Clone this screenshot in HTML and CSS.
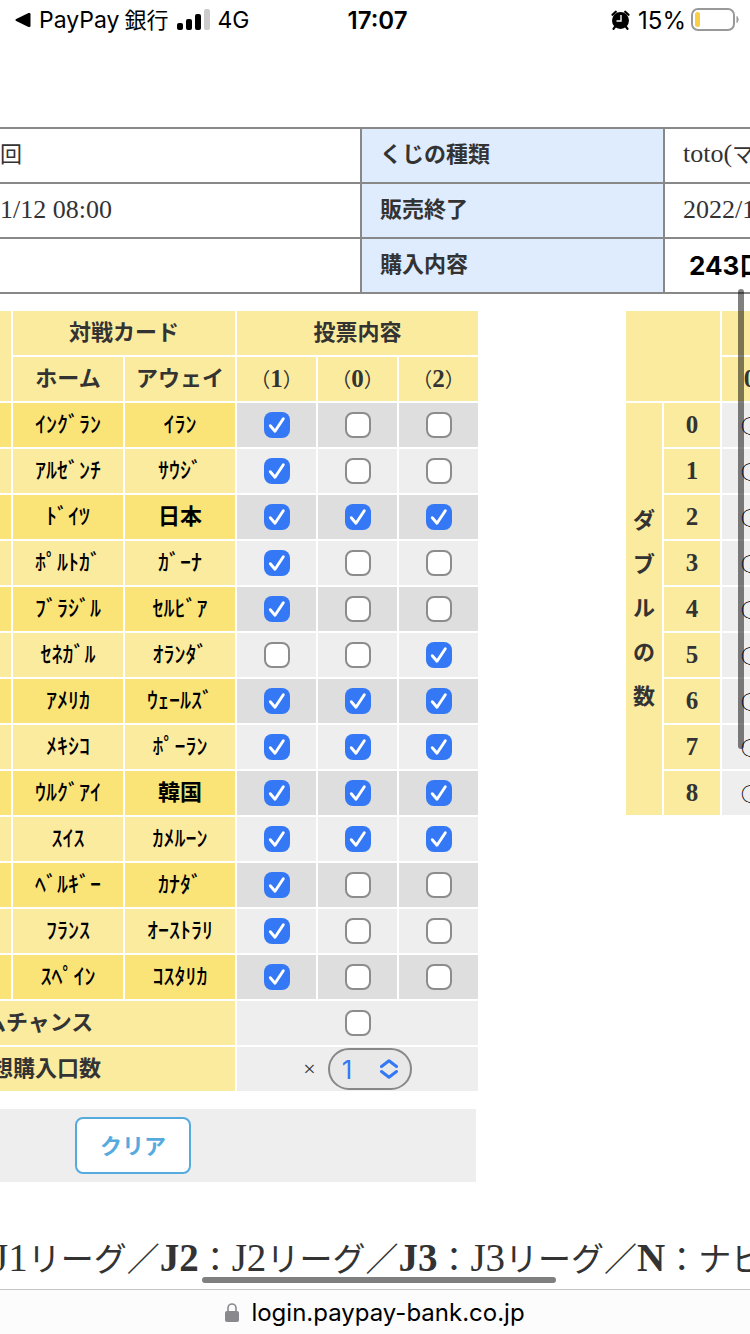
FILE: index.html
```
<!DOCTYPE html>
<html lang="ja">
<head>
    <meta charset="UTF-8">
    <meta name="viewport" content="width=device-width, initial-scale=1.0">
    <title>toto 購入</title>
    <link rel="stylesheet" href="styles.css">
</head>
<body>

    <header class="status">
        <div class="status-left">
            <svg class="back" width="16" height="16" viewBox="0 0 16 16"><path d="M1.2 7 13.5 1.1Q15.500 .4 15.500 2.200V13.800Q15.500 15.600 13.500 14.900L1.200 9Q-.4 8 1.200 7Z"/></svg>
            <span class="app">PayPay</span>
            <span class="bank">銀行</span>
            <svg class="signal" width="33" height="22" viewBox="0 0 33 22">
                <rect x="0" y="14" width="6" height="7" rx="2"/>
                <rect x="9" y="10" width="6" height="11" rx="2"/>
                <rect x="18" y="5" width="6" height="16" rx="2"/>
                <rect x="27" y="0" width="6" height="21" rx="2" fill="#ccc"/>
            </svg>
            <span>4G</span>
        </div>
        <time>17:07</time>
        <div class="status-right">
            <svg width="19" height="20" viewBox="0 0 19 20">
                <circle cx="9.500" cy="10.500" r="8.500"/>
                <path d="M1.500 4.800 4.800 1.700M14.200 1.700l3.300 3.100M4.200 16.500 2.500 18.800M14.800 16.500l1.700 2.300" stroke="#000" stroke-width="2.200" stroke-linecap="round"/>
                <path d="M10 5v6H5.500" fill="none" stroke="#fff" stroke-width="1.400"/>
            </svg>
            <span>15%</span>
            <svg width="49" height="24" viewBox="0 0 49 24">
                <rect x="1" y="1" width="42" height="21" rx="6" fill="#fff" stroke="#999" stroke-width="2"/>
                <rect x="4" y="4" width="5" height="15" rx="2.500" fill="#f7ce46"/>
                <path d="M46 8.500q2.500 3 0 6Z" fill="#999" stroke="#999"/>
            </svg>
        </div>
    </header>

    <main>
        <table class="info">
            <tr><td class="round">回</td><th>くじの種類</th><td class="right">toto(<span>マ</span></td></tr>
            <tr><td>1/12 08:00</td><th>販売終了</th><td class="right">2022/1</td></tr>
            <tr><td></td><th>購入内容</th><td class="right total">243口</td></tr>
        </table>

        <div class="sheets">
            <table class="card">
                <colgroup><col class="no"><col class="team"><col class="team"><col class="mark"><col class="mark"><col class="mark"></colgroup>
                <thead>
                    <tr><th rowspan="2"></th><th colspan="2">対戦カード</th><th colspan="3">投票内容</th></tr>
                    <tr><th>ホーム</th><th>アウェイ</th><th class="pick">（<b>1</b>）</th><th class="pick">（<b>0</b>）</th><th class="pick">（<b>2</b>）</th></tr>
                </thead>
                <tbody id="games"></tbody>
                <tfoot>
                    <tr>
                        <th colspan="3" class="cut chance"><label for="chance">ムチャンス</label></th>
                        <td colspan="3"><input type="checkbox" id="chance"></td>
                    </tr>
                    <tr>
                        <th colspan="3" class="cut units"><label for="units">想購入口数</label></th>
                        <td colspan="3">
                            <div class="amount">
                                <span>×</span>
                                <div class="picker">
                                    <select id="units"><option>1</option><option>2</option><option>3</option></select>
                                    <svg width="18" height="20" viewBox="0 0 18 20"><path d="M1.500 7.500 9 1.800l7.500 5.700M1.500 12.500 9 18.200l7.500-5.700"/></svg>
                                </div>
                            </div>
                        </td>
                    </tr>
                </tfoot>
            </table>

            <table class="multi">
                <colgroup><col class="side"><col class="num"><col class="num"></colgroup>
                <thead>
                    <tr><th colspan="2" rowspan="2"></th><th></th></tr>
                    <tr><th class="digit">0</th></tr>
                </thead>
                <tbody id="doubles"></tbody>
            </table>
        </div>

        <div class="actions">
            <button type="button" onclick="clearCard()">クリア</button>
        </div>

        <p class="legend"><span>J1</span>リーグ／<b>J2</b>：<span>J2</span>リーグ／<b>J3</b>：<span>J3</span>リーグ／<b>N</b>：ナビ</p>
    </main>

    <footer class="address">
        <svg width="14" height="19" viewBox="0 0 14 19"><rect y="8" width="14" height="11" rx="2"/><path d="M3 9V5a4 4 0 0 1 8 0V9" fill="none" stroke="#8a8a8e" stroke-width="1.600"/></svg>
        <span>login.paypay-bank.co.jp</span>
    </footer>

    <div class="scroll-y"></div>
    <div class="scroll-x"></div>

    <script src="script.js"></script>
</body>
</html>
```
FILE: styles.css
```
* {
    box-sizing: border-box;
}

body {
    position: relative;
    display: flex;
    flex-direction: column;
    height: 100vh;
    margin: 0;
    overflow: hidden;
    background-color: #fff;
    color: #333;
    font-family: 'Liberation Serif', 'Noto Sans CJK JP', serif;
    font-size: 22px;
}

/* status bar */
.status {
    display: grid;
    grid-template-columns: 1fr auto 1fr;
    align-items: center;
    height: 40px;
    padding: 0 10px 0 15px;
    color: #000;
    font-family: Inter, 'Noto Sans CJK JP', sans-serif;
    font-size: 24px;
}

.status-left,
.status-right {
    display: flex;
    align-items: center;
}

.status-left {
    gap: 8px;
    font-size: 23px;
}

.status-right {
    justify-content: flex-end;
    gap: 8px;
}

.status-right span {
    margin-right: -3px;
}

.status time {
    font-weight: 600;
}

.bank {
    margin-left: -3px;
    font-size: 22px;
    line-height: 24px;
}

main {
    flex: 1;
    min-height: 0;
    padding-top: 87px;
}

/* purchase summary */
.info {
    width: 100%;
    table-layout: fixed;
    border-collapse: collapse;
    white-space: nowrap;
}

.info th,
.info td {
    height: 55px;
    padding: 0 0 2px;
    border: 2px solid #888;
    line-height: 32px;
    text-align: left;
}

.info th {
    width: 303px;
    padding-left: 18px;
    background-color: #dfecfd;
}

.info td {
    width: 361px;
    border-left: 0;
    font-size: 26px;
}

.info td.right {
    width: auto;
    padding-left: 18px;
    border-right: 0;
}

.info td.round,
.info td.right span {
    font-size: 22px;
}

.info td.total {
    padding-left: 24px;
    padding-bottom: 0;
    color: #000;
    font-family: Inter, 'Noto Sans CJK JP', sans-serif;
    font-weight: 700;
}

/* voting card and multi table */
.sheets {
    display: flex;
    align-items: flex-start;
    gap: 144px;
    margin: 15px 0 0 -2px;
}

.card,
.multi {
    flex: none;
    table-layout: fixed;
    border-spacing: 2px;
    line-height: 32px;
}

.card {
    width: 482px;
}

.multi {
    width: 156px;
}

.no {
    width: 11px;
}

.team {
    width: 110px;
}

.mark {
    width: 79px;
}

.side {
    width: 36px;
}

.num {
    width: 56px;
}

.card th,
.card td,
.multi th,
.multi td {
    height: 44px;
    padding: 0;
    background-color: #eee;
    text-align: center;
    white-space: nowrap;
}

.card th,
.multi th {
    background-color: #fbeb9f;
}

.card th.pick {
    font-size: 20px;
    font-weight: 400;
}

.card th.pick b {
    font-size: 25px;
}

.card tbody th {
    color: #000;
    font-weight: 500;
}

.card tbody tr:nth-child(odd) th {
    background-color: #fae478;
}

.card tbody tr:nth-child(odd) td {
    background-color: #dedede;
}

.card tbody th.kanji {
    font-weight: 700;
}

.multi th.digit {
    font-size: 25px;
}

.multi th.vertical {
    line-height: 44px;
}

.multi td {
    color: #000;
    font-family: 'Noto Sans CJK JP', sans-serif;
    font-size: 18px;
    font-weight: 700;
}

.card th.cut {
    text-align: left;
}

.card th.chance {
    text-indent: -16px;
}

.card th.units {
    text-indent: -9px;
}

input[type="checkbox"] {
    display: block;
    width: 26px;
    height: 26px;
    margin: 0 auto;
    appearance: none;
    border: 2px solid #8c8c8c;
    border-radius: 8px;
    background-color: #fff;
}

input[type="checkbox"]:checked {
    border: 0;
    background: #3478f6 url("data:image/svg+xml,%3Csvg xmlns='http://www.w3.org/2000/svg' viewBox='0 0 26 26'%3E%3Cpath d='M6.300 13.700 11 19.200 19.300 6.800' fill='none' stroke='white' stroke-width='2.900' stroke-linecap='round' stroke-linejoin='round'/%3E%3C/svg%3E");
}

.amount {
    display: flex;
    align-items: center;
    justify-content: center;
    gap: 12px;
}

.picker {
    position: relative;
}

.picker select {
    display: block;
    width: 84px;
    height: 42px;
    padding: 0 12px;
    appearance: none;
    border: 2px solid #888;
    border-radius: 21px;
    background-color: #e8e8e8;
    color: #3478f6;
    font-family: Inter, sans-serif;
    font-size: 26px;
}

.picker svg {
    position: absolute;
    top: 11px;
    right: 14px;
    fill: none;
    stroke: #3478f6;
    stroke-width: 3;
    stroke-linecap: round;
    stroke-linejoin: round;
    pointer-events: none;
}

.actions {
    width: 476px;
    margin-top: 16px;
    padding: 8px 0 8px 75px;
    background-color: #eee;
}

.actions button {
    display: block;
    width: 116px;
    height: 57px;
    padding: 0 0 4px;
    border: 2px solid #55aade;
    border-radius: 8px;
    background-color: #fff;
    color: #55aade;
    font-family: 'Noto Sans CJK JP', sans-serif;
    font-size: 22px;
    font-weight: 700;
}

.legend {
    margin: 52px 0 0 -7px;
    font-size: 33px;
    line-height: 48px;
    white-space: nowrap;
}

.legend span,
.legend b {
    font-size: 39px;
}

/* browser address bar */
.address {
    display: flex;
    flex: none;
    align-items: center;
    justify-content: center;
    gap: 12px;
    height: 45px;
    border-top: 1px solid #c4c4c6;
    background-color: #fcfcfc;
    color: #000;
    font-family: Inter, sans-serif;
    font-size: 24px;
}

.address svg {
    fill: #8a8a8e;
}

.scroll-y,
.scroll-x {
    position: absolute;
    border-radius: 3px;
    background-color: rgba(0, 0, 0, 0.5);
}

.scroll-y {
    top: 289px;
    right: 6px;
    width: 6px;
    height: 460px;
}

.scroll-x {
    bottom: 51px;
    left: 202px;
    width: 354px;
    height: 6px;
}
```
FILE: script.js
```
const games = [
    ['ｲﾝｸﾞﾗﾝ', 'ｲﾗﾝ', '1'],
    ['ｱﾙｾﾞﾝﾁ', 'ｻｳｼﾞ', '1'],
    ['ﾄﾞｲﾂ', '日本', '102'],
    ['ﾎﾟﾙﾄｶﾞ', 'ｶﾞｰﾅ', '1'],
    ['ﾌﾞﾗｼﾞﾙ', 'ｾﾙﾋﾞｱ', '1'],
    ['ｾﾈｶﾞﾙ', 'ｵﾗﾝﾀﾞ', '2'],
    ['ｱﾒﾘｶ', 'ｳｪｰﾙｽﾞ', '102'],
    ['ﾒｷｼｺ', 'ﾎﾟｰﾗﾝ', '102'],
    ['ｳﾙｸﾞｱｲ', '韓国', '102'],
    ['ｽｲｽ', 'ｶﾒﾙｰﾝ', '102'],
    ['ﾍﾞﾙｷﾞｰ', 'ｶﾅﾀﾞ', '1'],
    ['ﾌﾗﾝｽ', 'ｵｰｽﾄﾗﾘ', '1'],
    ['ｽﾍﾟｲﾝ', 'ｺｽﾀﾘｶ', '1']
];

let rows = '';
for (const [home, away, picks] of games) {
    const kanji = away.length === 2 ? ' class="kanji"' : '';
    rows += `<tr><th></th><th>${home}</th><th${kanji}>${away}</th>`;
    for (const mark of ['1', '0', '2']) {
        const checked = picks.includes(mark) ? 'checked' : '';
        rows += `<td><input type="checkbox" aria-label="${home} ${away} ${mark}" ${checked}></td>`;
    }
    rows += '</tr>';
}
document.getElementById('games').innerHTML = rows;

let doubles = '';
for (let i = 0; i <= 8; i++) {
    const side = i === 0 ? '<th rowspan="9" class="vertical">ダ<br>ブ<br>ル<br>の<br>数</th>' : '';
    doubles += `<tr>${side}<th class="digit">${i}</th><td>○</td></tr>`;
}
document.getElementById('doubles').innerHTML = doubles;

function clearCard() {
    document.querySelectorAll('.card input').forEach(box => box.checked = false);
}
```
